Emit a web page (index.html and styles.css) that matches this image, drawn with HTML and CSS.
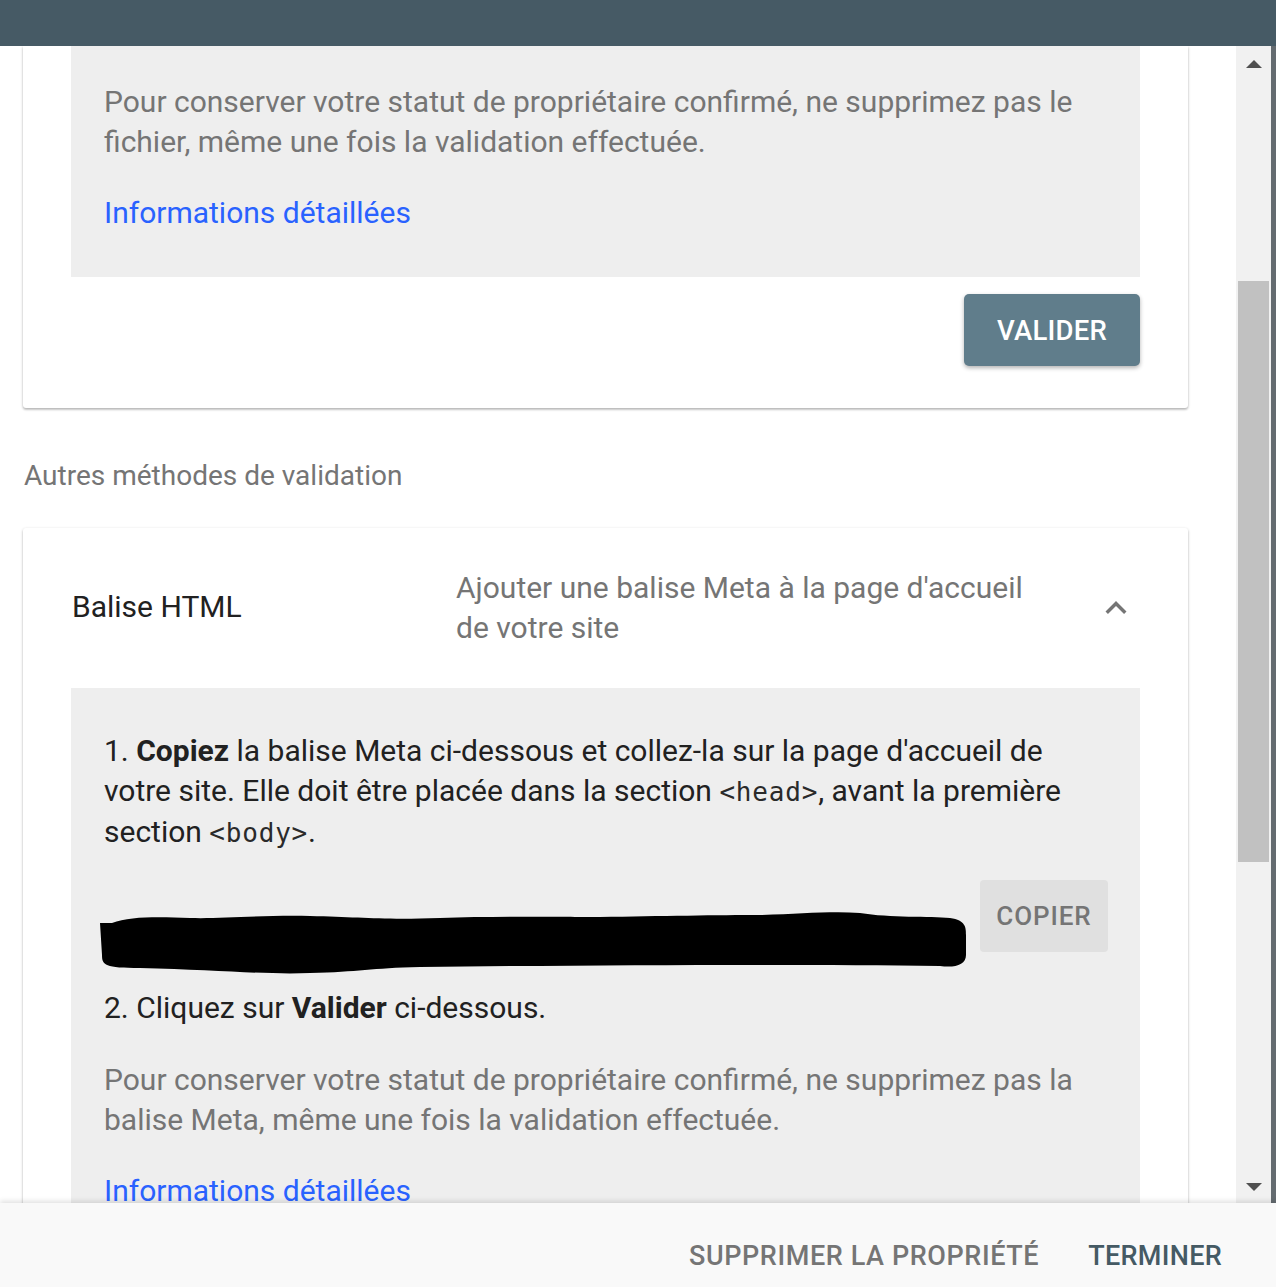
FILE: index.html
```html
<!DOCTYPE html>
<html lang="fr">
<head>
<meta charset="utf-8">
<title>Validation</title>
<link rel="stylesheet" href="styles.css">
</head>
<body>
<div class="app">
  <header class="topbar"></header>
  <div class="main">
    <div class="content">
      <section class="card card-first">
        <div class="panel panel-first">
          <p class="note">Pour conserver votre statut de propriétaire confirmé, ne supprimez pas le fichier, même une fois la validation effectuée.</p>
          <a class="link" href="#">Informations détaillées</a>
        </div>
        <div class="actions">
          <button class="btn-primary">VALIDER</button>
        </div>
      </section>

      <h2 class="section-title">Autres méthodes de validation</h2>

      <section class="card">
        <div class="method-head">
          <div class="method-name">Balise HTML</div>
          <div class="method-desc">Ajouter une balise Meta à la page d'accueil de votre site</div>
          <svg class="chevron" viewBox="0 0 24 24" width="42" height="42"><path d="M7.41 15.41L12 10.83l4.59 4.58L18 14l-6-6-6 6z" fill="#757575"/></svg>
        </div>
        <div class="panel panel-second">
          <p class="step step-one">1. <b>Copiez</b> la balise Meta ci-dessous et collez-la sur la page d'accueil de votre site. Elle doit être placée dans la section <code>&lt;head&gt;</code>, avant la première section <code>&lt;body&gt;</code>.</p>
          <div class="copy-row">
            <div class="meta-field">
              <svg class="redact" viewBox="0 0 866 65" width="866" height="65"><path d="M0,13 L12,13 C30,6 60,7 90,8 C120,9 160,5 210,6 C260,7 280,10 340,8 C400,6 480,7 500,7 C560,6 620,5 660,5 C700,4 730,1 760,3 C790,8 830,6 850,8 C866,10 866,18 866,25 L866,45 C866,55 855,58 840,56 C700,54 500,55 320,57 C270,58 260,62 210,63 C170,65 120,60 40,58 C5,58 2,55 2,45 Z" fill="#000"/></svg>
            </div>
            <button class="btn-copy">COPIER</button>
          </div>
          <p class="step step-two">2. Cliquez sur <b>Valider</b> ci-dessous.</p>
          <p class="note">Pour conserver votre statut de propriétaire confirmé, ne supprimez pas la balise Meta, même une fois la validation effectuée.</p>
          <a class="link" href="#">Informations détaillées</a>
        </div>
      </section>
    </div>
    <div class="scrollbar">
      <div class="arrow arrow-up"></div>
      <div class="track"><div class="thumb"></div></div>
      <div class="arrow arrow-down"></div>
    </div>
    <div class="edge"></div>
  </div>
  <footer class="footer">
    <button class="btn-text btn-muted">SUPPRIMER LA PROPRIÉTÉ</button>
    <button class="btn-text btn-strong">TERMINER</button>
  </footer>
</div>
</body>
</html>
```

FILE: styles.css
```css
* { box-sizing: border-box; }
html, body { margin: 0; padding: 0; }
body {
  font-family: Roboto, "Noto Sans", "Liberation Sans", sans-serif;
  background: #fff;
  color: #212121;
  width: 1276px;
  height: 1287px;
  overflow: hidden;
}
.app {
  display: flex;
  flex-direction: column;
  height: 1287px;
}
.topbar {
  height: 46px;
  flex: none;
  background: #465a65;
}
.main {
  flex: 1;
  display: flex;
  min-height: 0;
  position: relative;
}
.content {
  flex: 1;
  overflow: hidden;
  padding: 0 48px 0 23px;
}
.card {
  background: #fff;
  box-shadow: 0 1px 3px rgba(0,0,0,0.24), 0 2px 2px rgba(0,0,0,0.12);
  border-radius: 3px;
}
.card-first {
  border-radius: 0 0 3px 3px;
  padding-bottom: 42px;
}
.panel {
  margin: 0 48px;
  background: #eeeeee;
  padding: 36px 32px 44px 33px;
}
.panel-first { padding-top: 36px; }
.panel-second { padding-top: 43px; }
.note {
  margin: 0 0 31px;
  font-size: 30px;
  line-height: 40px;
  color: #757575;
}
.link {
  display: block;
  font-size: 30px;
  line-height: 40px;
  color: #2962ff;
  text-decoration: none;
}
.actions {
  display: flex;
  justify-content: flex-end;
  padding: 17px 48px 0;
}
.btn-primary {
  height: 72px;
  width: 176px;
  border: none;
  border-radius: 5px;
  background: #607d8b;
  color: #fff;
  font-family: Roboto, sans-serif;
  font-weight: 500;
  font-size: 27.5px;
  letter-spacing: 0.2px;
  box-shadow: 0 2px 4px rgba(0,0,0,0.3);
}
.section-title {
  margin: 48px 0 32px 1px;
  font-size: 28px;
  line-height: 40px;
  font-weight: 400;
  color: #757575;
}
.method-head {
  height: 160px;
  display: flex;
  align-items: center;
  padding: 0 48px 0 49px;
}
.method-name {
  width: 384px;
  font-size: 30px;
  line-height: 40px;
  color: #212121;
  padding-bottom: 2px;
}
.method-desc {
  width: 590px;
  font-size: 30px;
  line-height: 40px;
  color: #757575;
}
.chevron {
  margin-left: auto;
  margin-right: 3px;
}
.step {
  margin: 0;
  font-size: 30px;
  line-height: 40px;
  color: #212121;
}
.step b { font-weight: 700; }
code {
  font-family: "DejaVu Sans Mono", "Liberation Mono", monospace;
  font-size: 26px;
  letter-spacing: 0.8px;
  color: #2a2a2a;
}
.copy-row {
  display: flex;
  align-items: flex-start;
  margin-top: 27px;
  height: 72px;
}
.meta-field {
  flex: 1;
  height: 72px;
  position: relative;
}
.redact {
  position: absolute;
  left: -4px;
  top: 30px;
}
.btn-copy {
  width: 128px;
  height: 72px;
  border: none;
  border-radius: 4px;
  background: #e0e0e0;
  color: #757575;
  font-family: Roboto, sans-serif;
  font-weight: 500;
  font-size: 26px;
  letter-spacing: 0.9px;
}
.step-two {
  margin-top: 36px;
  margin-bottom: 32px;
}
.scrollbar {
  width: 35px;
  flex: none;
  background: #f1f1f1;
  display: flex;
  flex-direction: column;
}
.arrow {
  height: 35px;
  flex: none;
  display: flex;
  align-items: center;
  justify-content: center;
}
.arrow::before {
  content: "";
  width: 0; height: 0;
  border-left: 8px solid transparent;
  border-right: 8px solid transparent;
}
.arrow-up::before { border-bottom: 8px solid #505050; }
.arrow-down::before { border-top: 8px solid #505050; margin-top: 2px; }
.track {
  flex: 1;
  padding: 0 2px;
}
.thumb {
  margin-top: 200px;
  height: 581px;
  background: #c1c1c1;
}
.edge {
  width: 5px;
  flex: none;
  background: #646b70;
}
.footer {
  height: 84px;
  flex: none;
  background: #f9f9f9;
  box-shadow: 0 -2px 5px rgba(0,0,0,0.12);
  position: relative;
  z-index: 2;
  display: flex;
  justify-content: flex-end;
  align-items: flex-start;
  padding: 33px 54px 0 0;
  gap: 49px;
}
.btn-text {
  border: none;
  background: none;
  padding: 0;
  font-family: Roboto, sans-serif;
  font-weight: 500;
  font-size: 27px;
  line-height: 40px;
  letter-spacing: 0.3px;
}
.btn-muted { color: #757575; letter-spacing: 0.6px; }
.btn-strong { color: #455a64; }
```
